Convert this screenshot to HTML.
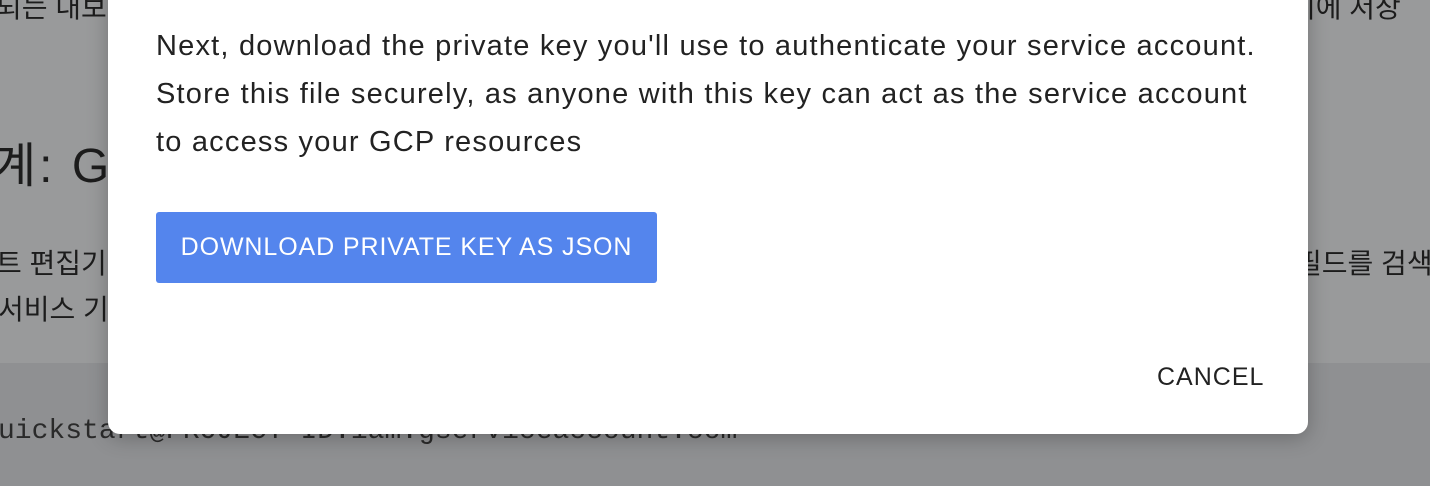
<!DOCTYPE html>
<html><head><meta charset="utf-8"><style>
html,body{margin:0;padding:0;width:1430px;height:486px;overflow:hidden;}
body{background:#999a9b;position:relative;font-family:"Liberation Sans","Noto Sans CJK KR",sans-serif;color:#1f1f1f;}
.low{position:absolute;left:0;top:363px;width:1430px;height:123px;background:#8f9092;}
.bg{position:absolute;white-space:nowrap;color:#1c1c1c;}
.dlg{position:absolute;left:108px;top:-20px;width:1200px;height:454px;background:#fff;border-radius:12px;box-shadow:0 4px 20px rgba(0,0,0,.25);}
.p{position:absolute;left:48px;top:42px;width:1150px;font-size:29px;letter-spacing:1.2px;line-height:48px;color:#222;white-space:nowrap;}
.btn{position:absolute;left:48px;top:232px;width:501px;height:71px;background:#5485ed;border-radius:3px;color:#fff;font-size:25px;letter-spacing:0.9px;line-height:71px;text-align:center;}
.cancel{position:absolute;left:1049px;top:380px;font-size:25px;letter-spacing:1px;line-height:34px;color:#222;}
</style></head><body>
<div class="low"></div>
<div class="bg" style="left:-4px;top:-14px;font-size:28px;">되는 내보</div>
<div class="bg" style="left:1290px;top:-14px;font-size:28px;">리에 저장</div>
<div class="bg" style="left:-8px;top:126px;font-size:48px;letter-spacing:3px;">계: G</div>
<div class="bg" style="left:-4px;top:242px;font-size:28px;">트 편집기</div>
<div class="bg" style="left:1296px;top:242px;font-size:28px;">필드를 검색</div>
<div class="bg" style="left:-2px;top:288px;font-size:28px;">서비스 기</div>
<div class="bg" style="left:-2px;top:416px;font-size:28px;font-family:'Liberation Mono',monospace;color:#2a2a2a;">uickstart@PROJECT-ID.iam.gserviceaccount.com</div>
<div class="dlg">
<div class="p">Next, download the private key you'll use to authenticate your service account.<br>Store this file securely, as anyone with this key can act as the service account<br>to access your GCP resources</div>
<div class="btn">DOWNLOAD PRIVATE KEY AS JSON</div>
<div class="cancel">CANCEL</div>
</div>
</body></html>
